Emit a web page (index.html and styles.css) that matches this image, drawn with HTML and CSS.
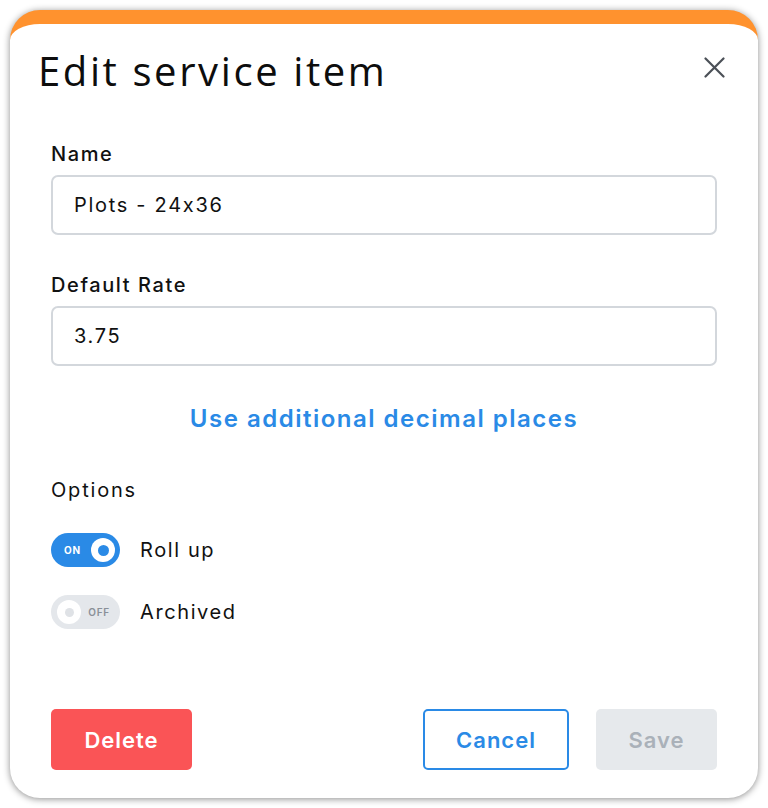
FILE: index.html
```html
<!DOCTYPE html>
<html lang="en">
<head>
<meta charset="utf-8">
<title>Edit service item</title>
<link rel="stylesheet" href="styles.css">
</head>
<body>
<div class="modal">
  <div class="modal-header">
    <h1 class="modal-title">Edit service item</h1>
    <button class="close-btn" aria-label="Close">
      <svg width="21" height="21" viewBox="0 0 21 21"><path d="M1.5 1.5 L19.5 19.5 M19.5 1.5 L1.5 19.5" stroke="#4b5057" stroke-width="2.2" stroke-linecap="round" fill="none"/></svg>
    </button>
  </div>
  <div class="modal-body">
    <label class="field-label first">Name</label>
    <div class="input">Plots - 24x36</div>
    <label class="field-label second">Default Rate</label>
    <div class="input">3.75</div>
    <div class="link-row"><a class="link">Use additional decimal places</a></div>
    <div class="options-title">Options</div>
    <div class="toggle-row">
      <span class="toggle on"><span class="toggle-text">ON</span><span class="knob"></span></span>
      <span class="toggle-label">Roll up</span>
    </div>
    <div class="toggle-row">
      <span class="toggle off"><span class="knob"></span><span class="toggle-text">OFF</span></span>
      <span class="toggle-label">Archived</span>
    </div>
  </div>
  <div class="modal-footer">
    <button class="btn btn-delete">Delete</button>
    <div class="footer-right">
      <button class="btn btn-cancel">Cancel</button>
      <button class="btn btn-save">Save</button>
    </div>
  </div>
</div>
</body>
</html>
```

FILE: styles.css
```css
* { box-sizing: border-box; }
html, body { margin: 0; padding: 0; background: #ffffff; }
body {
  font-family: Inter, "Noto Sans", sans-serif;
  color: #111;
  font-feature-settings: "calt" 0;
}

.modal {
  margin: 10px;
  width: 748px;
  height: 788px;
  border-radius: 30px;
  background: #fff;
  border-top: 14px solid #ff922e;
  box-shadow: 0 1px 7px rgba(0,0,0,0.45);
  overflow: hidden;
  display: flex;
  flex-direction: column;
}

.modal-header {
  display: flex;
  justify-content: space-between;
  align-items: flex-start;
  padding: 24px 33px 0 28px;
}
.modal-title {
  margin: 0;
  font-family: "Open Sans", sans-serif;
  font-weight: 400;
  font-size: 40px;
  line-height: 46px;
  color: #0d0d0d;
  letter-spacing: 2.6px;
}
.close-btn {
  border: 0;
  background: none;
  padding: 0;
  margin-top: 9px;
  width: 21px;
  height: 21px;
  cursor: pointer;
}

.modal-body {
  padding: 0 41px;
  display: flex;
  flex-direction: column;
}
.field-label {
  display: block;
  font-size: 20px;
  line-height: 24px;
  font-weight: 500;
  letter-spacing: 1.6px;
  margin-bottom: 9px;
}
.field-label.first { margin-top: 48px; }
.field-label.second { margin-top: 38px; }
.input {
  height: 60px;
  border: 2px solid #d3d7dc;
  border-radius: 7px;
  padding: 0 21px;
  display: flex;
  align-items: center;
  font-size: 20px;
  letter-spacing: 1.7px;
  color: #111;
}
.link-row {
  text-align: center;
  margin-top: 38px;
  line-height: 30px;
}
.link {
  color: #2a8ae6;
  font-size: 24px;
  font-weight: 600;
  letter-spacing: 1.5px;
  cursor: pointer;
}
.options-title {
  margin-top: 42px;
  font-size: 20px;
  line-height: 24px;
  letter-spacing: 1.8px;
}
.toggle-row {
  display: flex;
  align-items: center;
  gap: 20px;
  margin-top: 31px;
}
.toggle-row + .toggle-row { margin-top: 28px; }
.toggle {
  width: 69px;
  height: 34px;
  border-radius: 17px;
  display: flex;
  align-items: center;
  justify-content: space-between;
  padding: 0 5px 0 6px;
}
.toggle.on { background: #2a8ae6; padding-left: 13px; }
.toggle.off { background: #e4e7eb; padding-right: 10px; }
.toggle-text {
  font-size: 10px;
  font-weight: 700;
  letter-spacing: 0.8px;
}
.toggle.on .toggle-text { color: #fff; }
.toggle.off .toggle-text { color: #8a9098; font-weight: 600; }
.knob {
  width: 24px;
  height: 24px;
  border-radius: 50%;
  background: #fff;
  display: flex;
  align-items: center;
  justify-content: center;
}
.knob::after {
  content: "";
  width: 11px;
  height: 11px;
  border-radius: 50%;
  background: #2a8ae6;
}
.toggle.off .knob::after { width: 9px; height: 9px; background: #dfe2e6; }
.toggle-label { font-size: 20px; letter-spacing: 1.6px; color: #111; }

.modal-footer {
  margin-top: auto;
  padding: 0 41px 28px;
  display: flex;
  justify-content: space-between;
  align-items: center;
}
.footer-right { display: flex; gap: 27px; }
.btn {
  height: 61px;
  border-radius: 5px;
  font-family: Inter, "Noto Sans", sans-serif;
  font-size: 22px;
  font-weight: 600;
  letter-spacing: 1px;
  border: 0;
  cursor: pointer;
}
.btn-delete { width: 141px; background: #fa5456; color: #fff; }
.btn-cancel { width: 146px; background: #fff; border: 2px solid #2a8ae6; color: #2a8ae6; }
.btn-save { width: 121px; background: #e6e9ec; color: #aab1b9; }
```
